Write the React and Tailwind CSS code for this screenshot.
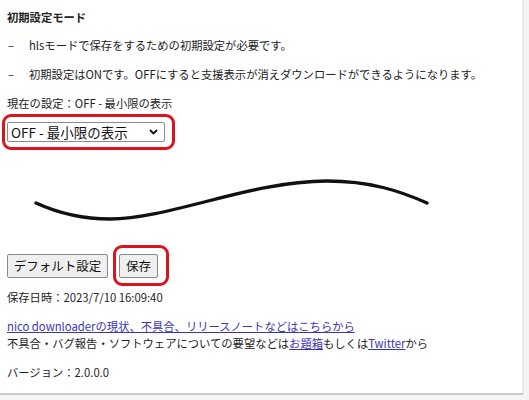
import React, { useState } from 'react';

const font = { fontFamily: '"Noto Sans CJK JP", "Noto Sans", sans-serif' };

const Bullet = ({ children, className }) => (
  <div className={`flex leading-[16px] ${className}`}>
    <span className="w-[22px] pl-[1px]">–</span>
    <span>{children}</span>
  </div>
);

const App = () => {
  const [mode, setMode] = useState('off');

  return (
    <div className="w-[529px] h-[400px] bg-[#f4f4f4] overflow-hidden" style={font}>
      <div className="w-[524px] h-[395px] bg-white border-r-2 border-r-[#ececec] border-b-2 border-b-[#c9c9c9] pl-[7px] pt-[9px] text-[11.3px] text-[#222]">
        <div className="font-bold leading-[16px]">初期設定モード</div>
        <Bullet className="mt-[12px]">hlsモードで保存をするための初期設定が必要です。</Bullet>
        <Bullet className="mt-[13px]">初期設定はONです。OFFにすると支援表示が消えダウンロードができるようになります。</Bullet>
        <div className="mt-[13px] leading-[16px]">現在の設定：OFF - 最小限の表示</div>

        <div className="relative mt-[11px] w-[158px]">
          <select
            value={mode}
            onChange={(e) => setMode(e.target.value)}
            className="appearance-none w-[158px] h-[20px] border border-[#8a8a8a] rounded-[2px] bg-white pl-[3px] text-[13.5px] leading-[18px] text-[#111]"
          >
            <option value="on">ON - 支援表示あり</option>
            <option value="off">OFF - 最小限の表示</option>
          </select>
          <svg className="absolute right-[7px] top-[7px] pointer-events-none" width="9" height="6" viewBox="0 0 9 6">
            <path d="M1 1 L4.5 4.5 L8 1" fill="none" stroke="#111" strokeWidth="1.8" />
          </svg>
          {/* annotation frame */}
          <div className="absolute left-[-5px] top-[-8px] w-[173px] h-[36px] border-[3px] border-[#d8141c] rounded-[9px] pointer-events-none" />
        </div>

        <svg className="block ml-[-7px]" width="529" height="112" viewBox="0 0 529 112">
          <path
            d="M36 61 C60 72 85 77 110 77 C170 77 250 39 327 39 C370 39 400 49 427 61"
            fill="none"
            stroke="#111"
            strokeWidth="3.3"
            strokeLinecap="round"
          />
        </svg>

        <div className="flex gap-[11px]">
          <button className="h-[24px] w-[101px] border border-[#8a8a8a] rounded-[2px] bg-[#efefef] text-[12.5px] text-[#111]">
            デフォルト設定
          </button>
          <div className="relative">
            <button className="h-[24px] w-[39px] border border-[#8a8a8a] rounded-[2px] bg-[#efefef] text-[12.5px] text-[#111]">
              保存
            </button>
            <div className="absolute left-[-6px] top-[-9px] w-[56px] h-[41px] border-[3px] border-[#d8141c] rounded-[9px] pointer-events-none" />
          </div>
        </div>

        <div className="mt-[11px] leading-[16px]">保存日時：2023/7/10 16:09:40</div>

        <div className="mt-[13px] leading-[17px]">
          <a href="#" className="text-[#3a35b0] underline">nico downloaderの現状、不具合、リリースノートなどはこちらから</a>
        </div>
        <div className="leading-[17px]">
          不具合・バグ報告・ソフトウェアについての要望などは
          <a href="#" className="text-[#3a35b0] underline">お題箱</a>
          もしくは
          <a href="#" className="text-[#3a35b0] underline">Twitter</a>
          から
        </div>

        <div className="mt-[12px] leading-[16px]">バージョン：2.0.0.0</div>
      </div>
    </div>
  );
};

export default App;
